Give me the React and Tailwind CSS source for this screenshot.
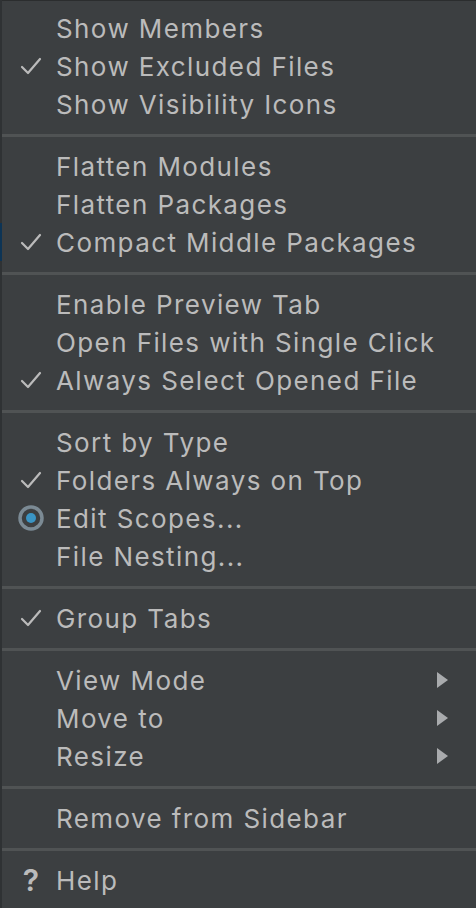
import React from "react";

const Check = () => (
  <svg width="22" height="20" viewBox="0 0 22 20" fill="none">
    <path d="M2 11 L8 17 L20 3" stroke="#bbbbbb" strokeWidth="2.2" strokeLinecap="round" strokeLinejoin="round" />
  </svg>
);

const Radio = () => (
  <svg width="28" height="28" viewBox="0 0 28 28">
    <circle cx="14" cy="14" r="11" fill="none" stroke="#7b8a94" strokeWidth="3.5" />
    <circle cx="14" cy="14" r="5" fill="#3a95c5" />
  </svg>
);

const Arrow = () => (
  <svg width="12" height="16" viewBox="0 0 12 16">
    <path d="M0 0 L11 8 L0 16 Z" fill="#a9abad" />
  </svg>
);

const Row = ({ icon, label, arrow }) => (
  <div className="flex h-[38px] items-center">
    <div className="flex w-[54px] items-center justify-center pl-[4px]">{icon}</div>
    <div className="flex-1 pt-[1px] text-[26px] leading-none text-[#bbbbbb] tracking-[1.4px]">{label}</div>
    {arrow && (
      <div className="mr-[27px] flex items-center">
        <Arrow />
      </div>
    )}
  </div>
);

const Sep = () => (
  <div className="pt-[11px] pb-[10px]">
    <div className="h-[3px] bg-[#505354]" />
  </div>
);

export default function App() {
  return (
    <div
      className="flex h-[908px] w-[476px] overflow-hidden bg-[#3c3f41]"
      style={{ fontFamily: "Inter, 'Noto Sans', sans-serif" }}
    >
      <div className="flex w-[2px] flex-col bg-[#2f3234]">
        <div className="h-[223px]" />
        <div className="h-[38px] bg-[#0d3455]" />
      </div>
      <div className="flex flex-1 flex-col">
        <div className="h-[1px] bg-[#2b2d2e]" />
        <div className="pt-[8px]">
          <Row label="Show Members" />
          <Row icon={<Check />} label="Show Excluded Files" />
          <Row label="Show Visibility Icons" />
          <Sep />
          <Row label="Flatten Modules" />
          <Row label="Flatten Packages" />
          <Row icon={<Check />} label="Compact Middle Packages" />
          <Sep />
          <Row label="Enable Preview Tab" />
          <Row label="Open Files with Single Click" />
          <Row icon={<Check />} label="Always Select Opened File" />
          <Sep />
          <Row label="Sort by Type" />
          <Row icon={<Check />} label="Folders Always on Top" />
          <Row icon={<Radio />} label="Edit Scopes..." />
          <Row label="File Nesting..." />
          <Sep />
          <Row icon={<Check />} label="Group Tabs" />
          <Sep />
          <Row label="View Mode" arrow />
          <Row label="Move to" arrow />
          <Row label="Resize" arrow />
          <Sep />
          <Row label="Remove from Sidebar" />
          <Sep />
          <Row
            icon={<span className="text-[30px] font-semibold leading-none text-[#bbbbbb]">?</span>}
            label="Help"
          />
        </div>
      </div>
    </div>
  );
}
